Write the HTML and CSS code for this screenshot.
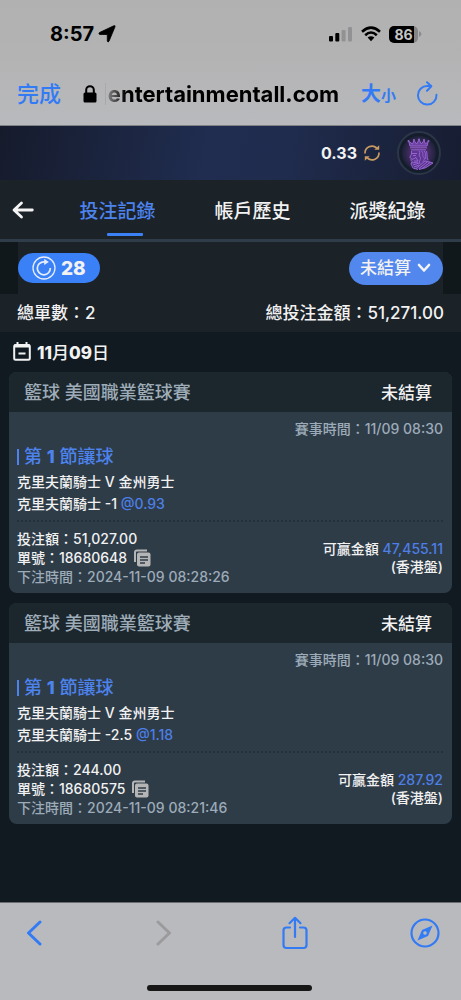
FILE: index.html
```
<!DOCTYPE html>
<html lang="zh-Hant">
<head>
<meta charset="utf-8">
<meta name="viewport" content="width=device-width, initial-scale=1">
<title>投注記錄</title>
<link rel="stylesheet" href="styles.css">
</head>
<body>
<svg class="sprite" aria-hidden="true">
  <symbol id="copy" viewBox="0 0 18 18">
    <path d="M2 13V3.500Q2 1.500 4 1.500H14" fill="none" stroke="currentColor" stroke-width="2"/>
    <rect x="4" y="3.500" width="13.500" height="14" rx="2" fill="currentColor"/>
    <path d="M7 8h8M7 11h8M7 14h5" stroke="#2e3c48" stroke-width="1.300"/>
  </symbol>
</svg>
<div class="page">
  <header class="browser">
    <div class="status">
      <div class="clock">8:57
        <svg width="18" height="18" viewBox="0 0 18 18"><path d="M17 1.800 11 16.200Q10 18 9.300 16V9.500H2Q0 9 1.500 7.500L15.800.8Q17.600.2 17 1.800Z" stroke="#000" stroke-width=".8" stroke-linejoin="round"/></svg>
      </div>
      <div class="signals">
        <svg width="24" height="16" viewBox="0 0 24 16"><rect x="0" y="10" width="4" height="5.500" rx="1"/><rect x="6.300" y="7" width="4" height="8.500" rx="1"/><rect x="12.600" y="4" width="4" height="11.500" rx="1" fill="#929294"/><rect x="19" y="1" width="4" height="14.500" rx="1" fill="#929294"/></svg>
        <svg width="20" height="16" viewBox="0 0 20 16"><g fill="none" stroke="#000" stroke-width="2.600"><path d="M1 5.700Q10-2.400 19 5.700"/><path d="M4.200 9.200Q10 3.800 15.800 9.200"/></g><path d="M6.600 11.600Q10 8.800 13.400 11.600L10 15.200Z"/></svg>
        <div class="battery"><span class="level">86</span><svg width="3" height="6" viewBox="0 0 3 6"><path d="M0 0Q5 3 0 6Z" fill="#8b8b8d"/></svg></div>
      </div>
    </div>
    <div class="address">
      <button class="done">完成</button>
      <div class="location">
        <svg width="14" height="18" viewBox="0 0 14 18"><rect x=".5" y="7.500" width="13" height="10" rx="1.500"/><path d="M3.200 8V5a3.800 3.800 0 0 1 7.600 0v3" fill="none" stroke="#000" stroke-width="2"/></svg>
        <span class="host">entertainmentall.com</span>
      </div>
      <button class="textsize" aria-label="大小">大<small>小</small></button>
      <button class="reload" aria-label="重新載入"><svg width="22" height="25" viewBox="0 0 22 25"><g fill="none" stroke="#337bf5" stroke-width="2" stroke-linecap="round" stroke-linejoin="round"><path d="M20.500 13.800A9.300 9.300 0 1 1 11.200 5H15"/><path d="M11 1.200 15.300 5.200 11 9.800"/></g></svg></button>
    </div>
  </header>

  <div class="account">
    <span class="balance">0.33</span>
    <button aria-label="更新餘額"><svg width="16" height="16" viewBox="0 0 16 16"><g fill="none" stroke="#c99b62" stroke-width="1.700"><path d="M1 8.500A7 7 0 0 1 12.700 3"/><path d="M15 7.500A7 7 0 0 1 3.300 13"/></g><path d="M10.300 4.700h4.900V.2ZM5.700 11.300H.8v4.500Z" fill="#c99b62"/></svg></button>
    <button class="avatar" aria-label="個人帳戶">
      <svg width="44" height="44" viewBox="0 0 44 44">
        <defs><radialGradient id="glow"><stop offset="0" stop-color="#5b3280"/><stop offset=".55" stop-color="#432c62"/><stop offset="1" stop-color="#1d2238"/></radialGradient></defs>
        <circle cx="22" cy="22" r="21" fill="#151d2c" stroke="#2b3649" stroke-width="2"/>
        <circle cx="22" cy="22" r="17" fill="url(#glow)"/>
        <path d="M14 19H29L31 29 36 32 27 38 18 38 14 33 15 29 13 27 15 23Z" fill="#60399a" opacity=".8"/>
        <g fill="none" stroke="#9763d2" stroke-width="1" stroke-linejoin="round">
          <path d="M13 15 11.800 10.500 15.500 13 17 9.500 19.500 13 22 9 24.500 13 27 9.500 28.500 13 31.200 10.500 30 15Z" fill="#6b42a2"/>
          <path d="M13 16.800H30M14 18.800H29"/>
          <path d="M14.500 20 14.500 23 12.800 26.500 14.500 27.500 13.800 29 15 30.500 14 33 16 37 21 38.500"/>
          <path d="M15 22.500h5M16 24.500h3M22 20c2 2-1 4 1 6s-2 4 0 7M24.500 20c3 3 0 4 2 6s0 4-1 5M27 20c3 3 0 5 2 8M29.500 20c1 3 0 5 1.500 9"/>
          <path d="M15 28.500 19 26.500 21 30 17 30M15 32 21 31M16 34 22 32M17 36 22 34M19 37.500 28 30 36 32 29 36.500 22 38.500M22 37.500 30 31M25 37.500 33 31.500"/>
        </g>
        <g fill="#9763d2"><circle cx="11.500" cy="10" r="1"/><circle cx="17" cy="9" r="1"/><circle cx="22" cy="8.500" r="1"/><circle cx="27" cy="9" r="1"/><circle cx="31.500" cy="10" r="1"/></g>
      </svg>
    </button>
  </div>

  <nav class="tabs">
    <button class="back" aria-label="返回"><svg width="22" height="18" viewBox="0 0 22 18"><path d="M9.500 2 2 9l7.500 7M2.500 9H20.300" fill="none" stroke="#f4f4f4" stroke-width="2.800" stroke-linecap="round" stroke-linejoin="round"/></svg></button>
    <a class="tab active" href="#bets">投注記錄</a>
    <a class="tab" href="#history">帳戶歷史</a>
    <a class="tab" href="#payouts">派獎紀錄</a>
  </nav>

  <main>
    <div class="filters">
      <div class="filter-row">
        <button class="countdown"><svg width="24" height="24" viewBox="0 0 24 24"><g fill="none" stroke="#e4edfb"><circle cx="12" cy="12" r="11" stroke-width="1.300"/><path d="M18.300 12A6.500 6.500 0 1 1 12 5.800H15" stroke-width="1.700"/></g><path d="M12.200 2.800 16.800 6 12.200 9Z" fill="#e4edfb"/></svg><span>28</span></button>
        <div class="picker">
          <select aria-label="注單狀態"><option>未結算</option><option>已結算</option></select>
          <svg width="14" height="10" viewBox="0 0 14 10"><path d="M2 2 7 7.500 12 2" fill="none" stroke="#f4f4f4" stroke-width="2.600" stroke-linecap="round" stroke-linejoin="round"/></svg>
        </div>
      </div>
    </div>
    <div class="summary"><span>總單數：2</span><span>總投注金額：51,271.00</span></div>
    <h2 class="date"><svg width="18" height="20" viewBox="0 0 18 20"><path d="M4.500 1v4M13.500 1v4" stroke="#f2f2f2" stroke-width="2"/><rect x="1.200" y="4" width="15.600" height="14.700" rx="1.500" fill="none" stroke="#f2f2f2" stroke-width="2"/><path d="M1 5h16" stroke="#f2f2f2" stroke-width="3"/><path d="M5.500 12.500h7" stroke="#f2f2f2" stroke-width="2"/></svg><span><b>11</b>月<b>09</b>日</span></h2>

    <div class="bets">
      <article class="card">
        <header class="card-head"><h3>籃球 美國職業籃球賽</h3><strong>未結算</strong></header>
        <div class="card-body">
          <p class="kickoff">賽事時間：11/09 08:30</p>
          <h4><span>第 <b>1</b> 節讓球</span></h4>
          <p class="pick">克里夫蘭騎士 V 金州勇士</p>
          <p class="pick">克里夫蘭騎士 -1 <span class="blue">@0.93</span></p>
          <div class="ticket">
            <div class="facts">
              <p>投注額：51,027.00</p>
              <p class="number">單號：18680648 <button aria-label="複製單號"><svg width="18" height="18"><use href="#copy"/></svg></button></p>
              <p class="muted">下注時間：2024-11-09 08:28:26</p>
            </div>
            <div class="win"><p>可贏金額 <span class="blue">47,455.11</span></p><p>(香港盤)</p></div>
          </div>
        </div>
      </article>
      <article class="card">
        <header class="card-head"><h3>籃球 美國職業籃球賽</h3><strong>未結算</strong></header>
        <div class="card-body">
          <p class="kickoff">賽事時間：11/09 08:30</p>
          <h4><span>第 <b>1</b> 節讓球</span></h4>
          <p class="pick">克里夫蘭騎士 V 金州勇士</p>
          <p class="pick">克里夫蘭騎士 -2.5 <span class="blue">@1.18</span></p>
          <div class="ticket">
            <div class="facts">
              <p>投注額：244.00</p>
              <p class="number">單號：18680575 <button aria-label="複製單號"><svg width="18" height="18"><use href="#copy"/></svg></button></p>
              <p class="muted">下注時間：2024-11-09 08:21:46</p>
            </div>
            <div class="win"><p>可贏金額 <span class="blue">287.92</span></p><p>(香港盤)</p></div>
          </div>
        </div>
      </article>
    </div>
  </main>

  <footer class="toolbar">
    <div class="tools">
      <button aria-label="上一頁"><svg width="16" height="26" viewBox="0 0 16 26"><path d="M14 2 2.500 13 14 24" fill="none" stroke="#337bf5" stroke-width="3" stroke-linecap="round" stroke-linejoin="round"/></svg></button>
      <button aria-label="下一頁" disabled><svg width="16" height="26" viewBox="0 0 16 26"><path d="M2 2 13.500 13 2 24" fill="none" stroke="#9b9b9d" stroke-width="3" stroke-linecap="round" stroke-linejoin="round"/></svg></button>
      <button aria-label="分享"><svg width="26" height="34" viewBox="0 0 26 34"><g fill="none" stroke="#337bf5" stroke-width="2.200" stroke-linecap="round" stroke-linejoin="round"><path d="M8 11.500H4.500Q1.500 11.500 1.500 14.500V29Q1.500 32 4.500 32H21.500Q24.500 32 24.500 29V14.500Q24.500 11.500 21.500 11.500H18"/><path d="M13 21V2M7.500 7.200 13 1.800 18.500 7.200"/></g></svg></button>
      <button aria-label="在 Safari 中打開"><svg width="30" height="30" viewBox="0 0 30 30"><circle cx="15" cy="15" r="13.500" fill="none" stroke="#337bf5" stroke-width="2.200"/><path d="M22.500 7.500 18 18 7.500 22.500 12 12Z" fill="#337bf5"/><circle cx="15" cy="15" r="1.800" fill="#b9babd"/></svg></button>
    </div>
    <div class="home"></div>
  </footer>
</div>
</body>
</html>
```
FILE: styles.css
```
* { box-sizing: border-box; }
body, h2, h3, h4, p { margin: 0; }
body {
  font-family: Inter, "Noto Sans CJK TC", sans-serif;
  font-size: 14px;
  font-weight: 500;
  color: #f2f2f2;
  background: #111a20;
}
button {
  display: inline-flex;
  align-items: center;
  justify-content: center;
  padding: 0;
  border: 0;
  background: none;
  color: inherit;
  font: inherit;
}
b { font-weight: 800; }
svg { display: block; flex: none; }
.sprite { position: absolute; width: 0; height: 0; }
.page { display: flex; flex-direction: column; min-height: 100vh; }
main { flex: 1; }
.blue { color: #4d7fe6; }
.muted { color: #9dabb8; }

.browser {
  background: linear-gradient(#b1b1b1, #b3b3b4 45%, #b9babd);
  border-bottom: 1px solid #808386;
  color: #000;
}
.status {
  display: flex;
  justify-content: space-between;
  align-items: center;
  height: 62px;
  padding: 6px 39px 0 50px;
}
.clock { display: flex; align-items: center; gap: 4px; font-size: 20px; font-weight: 700; }
.signals { display: flex; align-items: center; gap: 8px; }
.battery { display: flex; align-items: center; gap: 1px; }
.level {
  width: 29px;
  border-radius: 5px;
  background: linear-gradient(90deg, #000 86%, #858587 86%);
  color: #c6c6c7;
  font-size: 14px;
  font-weight: 700;
  line-height: 17px;
  text-align: center;
}
.address {
  display: flex;
  align-items: center;
  height: 63px;
  padding: 0 23px 0 17px;
}
.done, .textsize { color: #337bf5; font-size: 22px; line-height: 26px; }
.location { flex: 1; display: flex; align-items: center; justify-content: center; gap: 8px; }
.host {
  padding-left: 2px;
  border-left: 1px solid #a9a9ab;
  font-size: 22px;
  font-weight: 700;
  line-height: 22px;
  background: linear-gradient(90deg, #909092, #000 20px);
  background-clip: text;
  -webkit-background-clip: text;
  color: transparent;
}
.textsize {
  align-items: baseline;
  margin-right: 20px;
  padding-top: 2px;
  font-size: 20px;
  font-weight: 700;
}
.textsize small { font-size: 15px; }

.account {
  display: flex;
  align-items: center;
  justify-content: flex-end;
  gap: 7px;
  height: 54px;
  padding-right: 20px;
  background: linear-gradient(100deg, #161b2c, #202d50 45%, #202c4e 62%, #171d31);
}
.balance { font-size: 16px; font-weight: 700; }
.avatar { margin-left: 10px; }

.tabs {
  display: flex;
  height: 62px;
  padding-right: 6px;
  background: #1b2228;
  border-bottom: 3px solid #2f3d4a;
}
.back { width: 50px; padding-right: 4px; }
.tab {
  position: relative;
  flex: 1;
  display: flex;
  align-items: center;
  justify-content: center;
  font-size: 19px;
  color: inherit;
  text-decoration: none;
}
.tab.active { color: #4d83ed; }
.tab.active::after {
  content: "";
  position: absolute;
  bottom: 3px;
  left: calc(50% - 11px);
  width: 36px;
  height: 3px;
  border-radius: 1px;
  background: #3c82f7;
}

.filters { padding: 0 18px; background: #11181b; }
.filter-row {
  display: flex;
  align-items: center;
  justify-content: space-between;
  height: 52px;
  background: #1b2228;
}
.countdown {
  gap: 5px;
  height: 30px;
  padding: 0 14px;
  border-radius: 15px;
  background: #3a80f7;
  font-size: 19px;
  font-weight: 800;
}
.picker {
  position: relative;
  display: flex;
  align-items: center;
}
.picker select {
  appearance: none;
  height: 33px;
  padding: 0 32px 0 11px;
  border: 0;
  border-radius: 17px;
  background: #5287ed;
  color: inherit;
  font: inherit;
  font-size: 17px;
}
.picker svg { position: absolute; right: 12px; pointer-events: none; }
.summary {
  display: flex;
  justify-content: space-between;
  padding: 0 17px;
  background: #1b2228;
  font-size: 17px;
  line-height: 38px;
}
.date {
  display: flex;
  align-items: center;
  gap: 6px;
  height: 40px;
  padding: 0 0 2px 13px;
  font-size: 17px;
  font-weight: 500;
}

.bets { display: grid; gap: 10px; padding: 0 9px; }
.card { border-radius: 8px; overflow: hidden; background: #2e3c48; }
.card-head {
  display: flex;
  align-items: center;
  justify-content: space-between;
  height: 40px;
  padding: 0 20px 2px 15px;
  background: #1b262d;
}
.card-head h3 { font-size: 18px; font-weight: 500; color: #9eacb8; }
.card-head strong { font-size: 17px; font-weight: 500; }
.card-body { padding: 6px 9px 7px 8px; }
.kickoff { line-height: 22px; text-align: right; color: #9dabb8; }
.card h4 {
  display: flex;
  align-items: center;
  margin: 5px 0 2px;
  font-size: 18px;
  font-weight: 500;
  line-height: 24px;
  color: #4d83ed;
}
.card h4::before {
  content: "";
  width: 2px;
  height: 16px;
  margin-right: 5px;
  background: #4d83ed;
}
.pick { line-height: 22px; }
.ticket {
  display: flex;
  align-items: center;
  justify-content: space-between;
  margin-top: 5px;
  padding-top: 7px;
  border-top: 2px dotted #24313b;
}
.facts { line-height: 19px; }
.number { display: flex; align-items: center; gap: 6px; height: 19px; }
.number button { color: #b5b5b5; }
.win { line-height: 18px; text-align: right; }

.toolbar {
  border-top: 1px solid #6a6d70;
  background: #b9babd;
  padding: 13px 21px 9px 19px;
}
.tools { display: flex; align-items: center; justify-content: space-between; height: 34px; }
.tools button { width: 30px; }
.home {
  width: 39%;
  height: 6px;
  margin: 35px auto 0;
  border-radius: 3px;
  background: #171717;
}
```
